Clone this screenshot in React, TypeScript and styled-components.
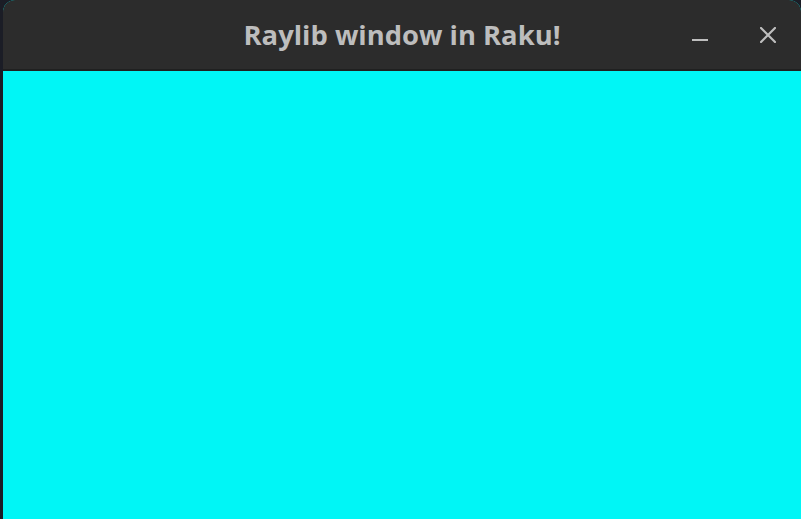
import React from "react";
import styled, { createGlobalStyle } from "styled-components";

const Global = createGlobalStyle`
  html, body { margin: 0; padding: 0; background: #1b1d26; overflow: hidden; }
  #root { width: 801px; height: 519px; }
`;

const Desktop = styled.div`
  display: flex;
  width: 801px;
  height: 519px;
  padding-left: 3px;
  box-sizing: border-box;
  background: #1b1d26;
`;

const Window = styled.div`
  flex: 1;
  display: flex;
  flex-direction: column;
  border-radius: 12px 12px 0 0;
  overflow: hidden;
  background: #00f6f6;
`;

const TitleBar = styled.div`
  height: 69px;
  flex: none;
  display: grid;
  grid-template-columns: 1fr auto 1fr;
  align-items: center;
  background: #2c2c2c;
  border-bottom: 2px solid #202020;
`;

const Title = styled.div`
  grid-column: 2;
  font-family: "Open Sans", "Noto Sans", sans-serif;
  font-weight: 700;
  font-size: 27.4px;
  color: #bdbdbd;
  white-space: nowrap;
  padding-top: 0px;
`;

const Controls = styled.div`
  grid-column: 3;
  justify-self: end;
  display: flex;
  align-items: center;
  gap: 36px;
  padding-right: 17px;
`;

const CtlButton = styled.div`
  width: 32px;
  height: 32px;
  display: flex;
  align-items: center;
  justify-content: center;
  color: #bebebe;
`;

const Canvas = styled.div`
  flex: 1;
  background: #00f6f6;
`;

export default function App() {
  return (
    <>
      <Global />
      <Desktop>
        <Window>
          <TitleBar>
            <Title>Raylib window in Raku!</Title>
            <Controls>
              <CtlButton>
                <svg width="16" height="16" viewBox="0 0 16 16">
                  <rect x="0" y="12" width="16" height="2" fill="currentColor" />
                </svg>
              </CtlButton>
              <CtlButton>
                <svg width="16" height="16" viewBox="0 0 16 16">
                  <path d="M1 1 L15 15 M15 1 L1 15" stroke="currentColor" strokeWidth="2.2" strokeLinecap="square" />
                </svg>
              </CtlButton>
            </Controls>
          </TitleBar>
          <Canvas />
        </Window>
      </Desktop>
    </>
  );
}
